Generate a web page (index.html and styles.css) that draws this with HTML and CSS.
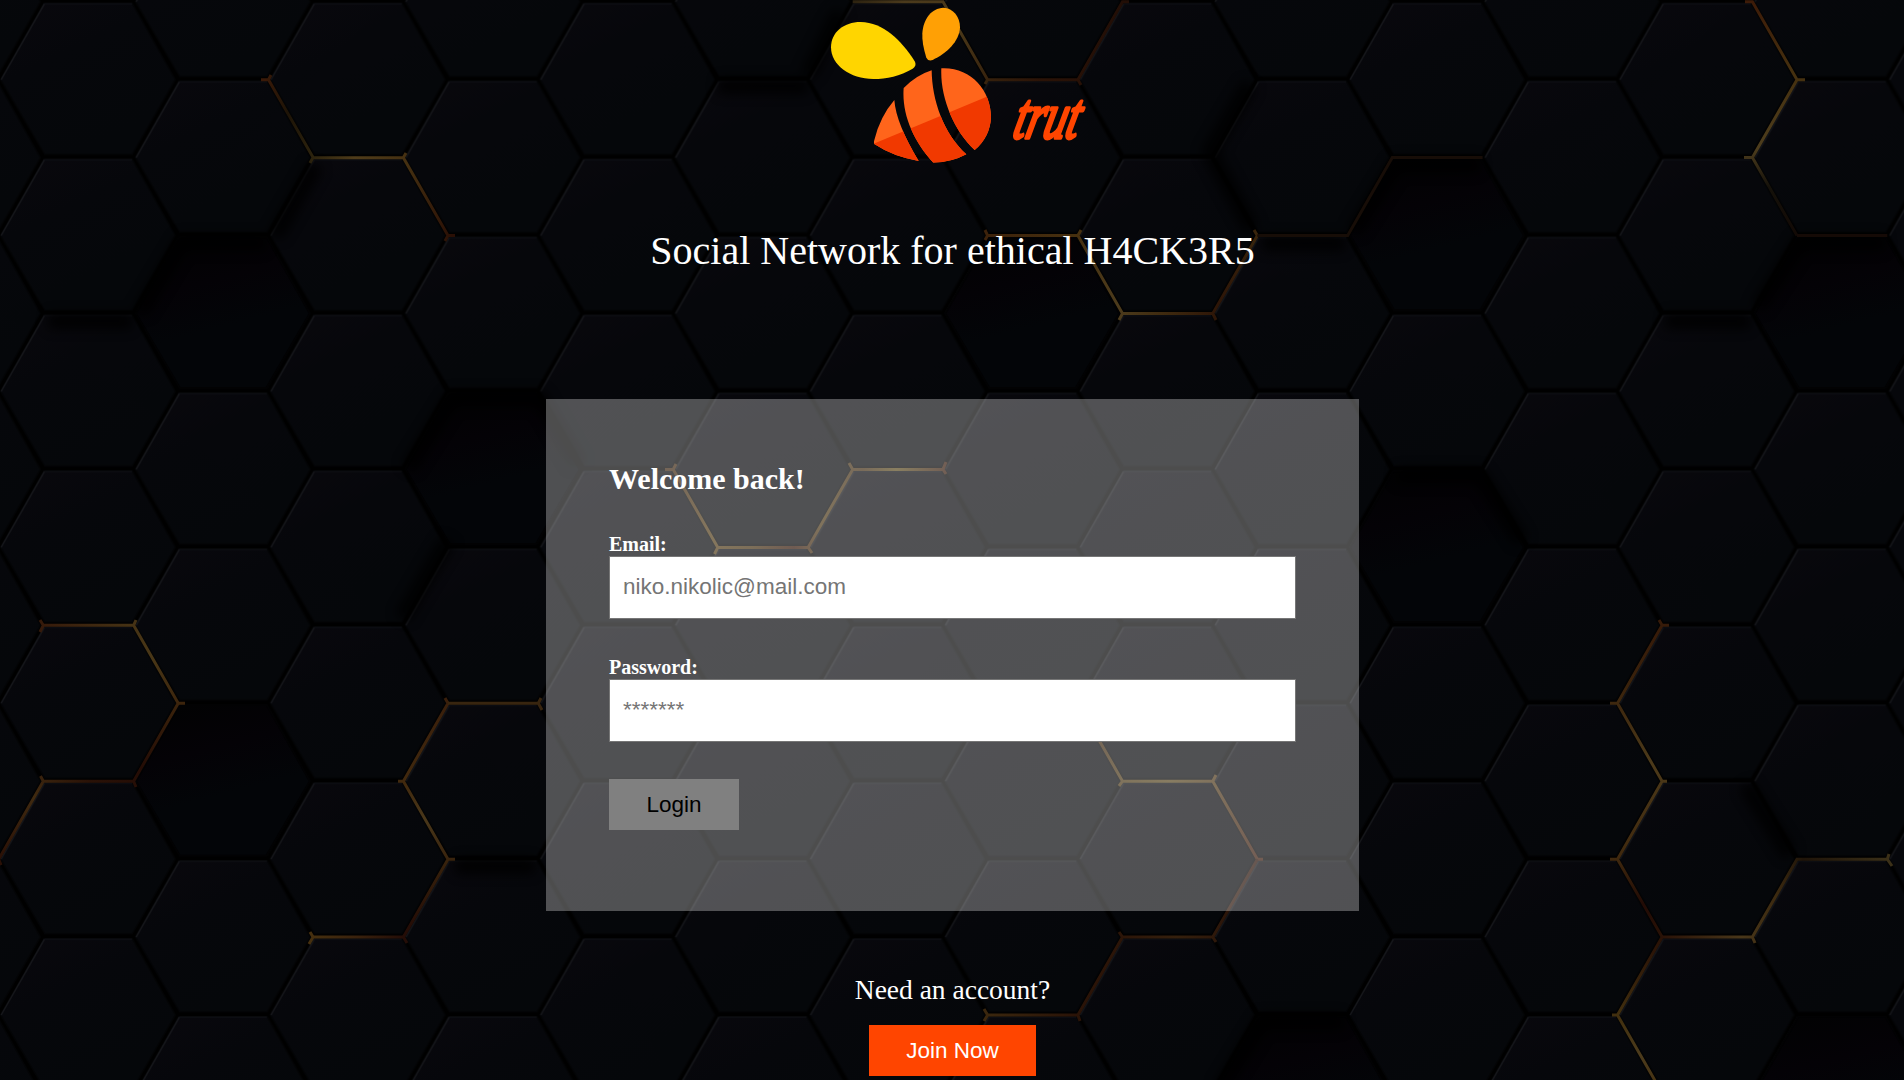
FILE: index.html
```html
<!DOCTYPE html>
<html lang="en">
<head>
  <meta charset="utf-8">
  <title>trut</title>
  <link rel="stylesheet" href="styles.css">
</head>
<body>
  <svg class="backdrop" viewBox="0 0 1904 1080" aria-hidden="true">
    <defs>
      <linearGradient id="face" x1="0.1" y1="0" x2="0.6" y2="0.9">
        <stop offset="0" stop-color="#09080d"/>
        <stop offset="0.4" stop-color="#06070b"/>
        <stop offset="1" stop-color="#05070a"/>
      </linearGradient>
      <linearGradient id="sunk" x1="0.3" y1="0" x2="0.6" y2="1">
        <stop offset="0" stop-color="#020203"/>
        <stop offset="0.3" stop-color="#040206"/>
        <stop offset="0.6" stop-color="#030508"/>
        <stop offset="1" stop-color="#030508"/>
      </linearGradient>
      <filter id="shade" filterUnits="userSpaceOnUse" x="0" y="0" width="1904" height="1080" color-interpolation-filters="sRGB"><feGaussianBlur stdDeviation="6"/></filter>
      <g id="cell">
        <path d="M-44 -76.2H43.5L86.500 0L43.500 74.500H-43.5L-87.5 0Z" fill="url(#face)" stroke="#030406" stroke-width="1.500"/>
        <path d="M-87.300 0L-44 -75.800" fill="none" stroke="#15161a" stroke-width="1.500"/>
        <path d="M-44 -75.800H43.5" fill="none" stroke="#0e0f14" stroke-width="1.300"/>
      </g>
      <g id="low">
        <path d="M-44 -76.2H43.5L86.500 0L43 74.500H-43.5L-87.5 0Z" fill="url(#sunk)" stroke="#020203" stroke-width="2"/>
      </g>
      <pattern id="comb" patternUnits="userSpaceOnUse" x="0" y="1.7" width="269.8" height="155.9">
        <rect width="269.8" height="155.9" fill="#000"/>
        <use href="#cell" x="88.45" y="77.95"/>
        <use href="#cell" x="223.35" y="0"/>
        <use href="#cell" x="223.35" y="155.9"/>
        <use href="#cell" x="-46.45" y="0"/>
        <use href="#cell" x="-46.45" y="155.9"/>
      </pattern>
      <linearGradient id="g1" gradientUnits="userSpaceOnUse" x1="265" y1="0" x2="452" y2="0">
        <stop offset="0" stop-color="#3b1a08"/><stop offset=".12" stop-color="#1e1407"/><stop offset=".25" stop-color="#2b220d"/><stop offset=".48" stop-color="#4f3c1a"/><stop offset=".76" stop-color="#453011"/><stop offset="1" stop-color="#2a0f05"/>
      </linearGradient>
      <linearGradient id="g2" gradientUnits="userSpaceOnUse" x1="850" y1="0" x2="1122" y2="0">
        <stop offset="0" stop-color="#2b210f"/><stop offset=".2" stop-color="#4b3a1c"/><stop offset=".4" stop-color="#4a3819"/><stop offset=".52" stop-color="#35200c"/><stop offset=".7" stop-color="#2b1307"/><stop offset="1" stop-color="#220e06"/>
      </linearGradient>
      <linearGradient id="g3" gradientUnits="userSpaceOnUse" x1="985" y1="0" x2="1260" y2="0">
        <stop offset="0" stop-color="#3d220b"/><stop offset=".33" stop-color="#46300f"/><stop offset=".48" stop-color="#4c3b1c"/><stop offset=".65" stop-color="#3f2a0f"/><stop offset=".85" stop-color="#2d1507"/><stop offset="1" stop-color="#3a260d"/>
      </linearGradient>
      <linearGradient id="g4" gradientUnits="userSpaceOnUse" x1="0" y1="0" x2="0" y2="240">
        <stop offset="0" stop-color="#3d1b08"/><stop offset=".3" stop-color="#45300f"/><stop offset=".62" stop-color="#4d3d1d"/><stop offset=".78" stop-color="#15110a"/><stop offset="1" stop-color="#120905"/>
      </linearGradient>
      <linearGradient id="g5" gradientUnits="userSpaceOnUse" x1="670" y1="0" x2="946" y2="0">
        <stop offset="0" stop-color="#3a2410"/><stop offset=".15" stop-color="#513c18"/><stop offset=".3" stop-color="#443012"/><stop offset=".45" stop-color="#321508"/><stop offset=".55" stop-color="#4a3716"/><stop offset=".7" stop-color="#402c14"/><stop offset=".82" stop-color="#57481d"/><stop offset="1" stop-color="#351a0c"/>
      </linearGradient>
      <linearGradient id="g6" gradientUnits="userSpaceOnUse" x1="38" y1="0" x2="180" y2="0">
        <stop offset="0" stop-color="#35190a"/><stop offset=".6" stop-color="#443013"/><stop offset=".8" stop-color="#493717"/><stop offset="1" stop-color="#3c240c"/>
      </linearGradient>
      <linearGradient id="g7" gradientUnits="userSpaceOnUse" x1="180" y1="703" x2="0" y2="860">
        <stop offset="0" stop-color="#3c240c"/><stop offset=".3" stop-color="#240c05"/><stop offset=".5" stop-color="#2a1207"/><stop offset=".72" stop-color="#402a10"/><stop offset="1" stop-color="#2a1006"/>
      </linearGradient>
      <linearGradient id="g8" gradientUnits="userSpaceOnUse" x1="0" y1="700" x2="0" y2="938">
        <stop offset="0" stop-color="#3a1f0b"/><stop offset=".35" stop-color="#41290e"/><stop offset=".5" stop-color="#49371a"/><stop offset=".7" stop-color="#36200b"/><stop offset=".95" stop-color="#250d06"/><stop offset="1" stop-color="#240d07"/>
      </linearGradient>
      <linearGradient id="g8b" gradientUnits="userSpaceOnUse" x1="310" y1="0" x2="404" y2="0">
        <stop offset="0" stop-color="#46300f"/><stop offset=".5" stop-color="#3a220d"/><stop offset="1" stop-color="#240d07"/>
      </linearGradient>
      <linearGradient id="g9" gradientUnits="userSpaceOnUse" x1="1078" y1="0" x2="1260" y2="0">
        <stop offset="0" stop-color="#2f180a"/><stop offset=".25" stop-color="#4a3817"/><stop offset=".5" stop-color="#55451f"/><stop offset=".75" stop-color="#4b3618"/><stop offset="1" stop-color="#37180b"/>
      </linearGradient>
      <linearGradient id="g10" gradientUnits="userSpaceOnUse" x1="985" y1="0" x2="1258" y2="0">
        <stop offset="0" stop-color="#3b270e"/><stop offset=".33" stop-color="#2a1307"/><stop offset=".5" stop-color="#2c1508"/><stop offset=".7" stop-color="#35200d"/><stop offset="1" stop-color="#260f07"/>
      </linearGradient>
      <linearGradient id="g11" gradientUnits="userSpaceOnUse" x1="0" y1="620" x2="0" y2="1093">
        <stop offset="0" stop-color="#361a09"/><stop offset=".14" stop-color="#3a220b"/><stop offset=".3" stop-color="#4c3a1a"/><stop offset=".5" stop-color="#40290e"/><stop offset=".6" stop-color="#220b05"/><stop offset=".7" stop-color="#2c1507"/><stop offset=".84" stop-color="#42300f"/><stop offset=".92" stop-color="#4c3b1c"/><stop offset="1" stop-color="#453010"/>
      </linearGradient>
      <linearGradient id="g12" gradientUnits="userSpaceOnUse" x1="1662" y1="0" x2="1890" y2="0">
        <stop offset="0" stop-color="#2a1207"/><stop offset=".35" stop-color="#49371a"/><stop offset=".5" stop-color="#3c2a10"/><stop offset=".62" stop-color="#1f1409"/><stop offset="1" stop-color="#3b3018"/>
      </linearGradient>
    </defs>

    <rect width="1904" height="1080" fill="url(#comb)"/>

    <!-- recessed cells -->
    <use href="#low" x="223.35" y="313.5"/>
    <use href="#low" x="493.15" y="469.4"/>
    <use href="#low" x="223.35" y="781.2"/>
    <use href="#low" x="1032.75" y="313.5"/>
    <use href="#low" x="1437.45" y="235.6"/>
    <use href="#low" x="1437.45" y="547.4"/>
    <use href="#low" x="1842.15" y="313.5"/>
    <use href="#low" x="1302.55" y="1093"/>
    <use href="#low" x="1842.15" y="1093"/>

    <!-- shadows thrown by the raised cells -->
    <g fill="none" stroke="#000" stroke-width="16" opacity=".85" filter="url(#shade)">
      <path d="M140 313L182 243H266"/>
      <path d="M408 469L452 399H540L578 465"/>
      <path d="M275 236L316 165"/>
      <path d="M48 321H132"/>
      <path d="M448 540L402 618"/>
      <path d="M718 86H808"/>
      <path d="M1250 84L1210 152L1252 230"/>
      <path d="M1354 232L1396 165H1480"/>
      <path d="M1262 243H1345"/>
      <path d="M1758 308L1800 243H1885"/>
      <path d="M1665 321H1750"/>
      <path d="M1396 476H1480L1522 542"/>
      <path d="M1746 785L1790 855"/>
      <path d="M1220 1090L1262 1022H1344"/>
      <path d="M840 12L808 75"/>
      <path d="M455 866H535"/>
    </g>

    <!-- lit seams -->
    <g fill="none" stroke-width="3">
      <g stroke="url(#g1)"><path d="M271 75L268.500 79.700L313.100 157.600L403.400 157.700L448 235.600L445 241M261 79.700H268.500M313 157.600L310 163M403.400 157.600L406 153M448 235.600H455"/></g>
      <g stroke="url(#g2)"><path d="M852.700 1.700H943L987.600 79.700H1077.900L1122.500 1.700H1129M987.600 79.700L985 84M1077.900 79.700L1081 85"/></g>
      <g stroke="url(#g3)"><path d="M985 230L987.600 235.600H1077.900L1122.500 313.500H1212.800L1257.400 235.600M987.600 235.600L985 240M1077.900 235.600L1081 230M1122.500 313.500L1119 320M1212.800 313.500L1216 320M1257.400 235.600L1254 230"/></g>
      <path d="M1257.400 235.600H1347.700L1392.300 157.600H1482.600" stroke="#170d07"/>
      <g stroke="url(#g4)"><path d="M1745 1.700H1752.400L1797 79.700L1752.400 157.600L1797 235.600V235.700M1797 79.700H1805M1752.400 157.600H1744"/></g>
      <path d="M1797 235.600H1887.300" stroke="#150a06"/>
      <g stroke="url(#g5)"><path d="M676 464L673.200 469.400L717.800 547.400H808.100L852.700 469.400H943M665 469.400H673M717.800 547.400L714.500 554M808.100 547.400L812 553M852.700 469.400L849 463M946 462L943 469.400L946 474"/></g>
      <g stroke="url(#g6)"><path d="M40 620L43.300 625.300H133.600L178.200 703.300H185M43.300 625.300L40 632M133.600 625.300L136 620"/></g>
      <g stroke="url(#g7)"><path d="M178.200 703.300L133.600 781.200H43.300L-1.300 859.200L1 865M133.600 781.200L136 787M43.300 781.200L40.500 776"/></g>
      <g stroke="url(#g8)"><path d="M448 703.300L403.400 781.200L448 859.200L403.400 937.100L407 943M448 703.300L445 698M403.400 781.200H398M448 859.200H455"/></g>
      <path d="M448 703.300H538.300L542 710M538.300 703.300L541 698" stroke="#38250f"/>
      <path d="M403.400 937.100H313.100L309 944M313.100 937.100L310 932" stroke="url(#g8b)"/>
      <g stroke="url(#g9)"><path d="M1077.900 703.300L1122.500 781.200H1212.800L1257.400 859.200M1122.500 781.200L1119 786M1212.800 781.200L1216 775M1257.400 859.200H1263"/></g>
      <g stroke="url(#g10)"><path d="M1257.400 859.200L1212.800 937.100H1122.500L1077.900 1015.100H987.600L984 1021M987.600 1015.100L984 1009M1212.800 937.100L1216 942M1122.500 937.100L1119 932M1077.900 1015.100L1080 1021"/></g>
      <g stroke="url(#g11)"><path d="M1659 620L1662.100 625.300L1617.500 703.300L1662.100 781.200L1617.500 859.200L1662.100 937.100L1617.500 1015.100L1662.100 1093M1662.100 625.300H1669M1617.500 703.300H1610M1662.100 781.200H1667M1617.500 859.200H1610M1617.500 1015.100H1612"/></g>
      <g stroke="url(#g12)"><path d="M1662.100 937.100H1752.400L1797 859.200H1887.300L1892 866M1752.400 937.100L1755 943M1887.300 859.200L1889 854"/></g>
    </g>
  </svg>

  <main class="page">
    <header class="brand">
      <svg class="logo" viewBox="0 0 900 540" role="img" aria-label="trut">
        <defs>
          <clipPath id="body">
            <path d="M253 300Q258 370 326 483Q250 470 194 433Q190 430 193 420Q210 350 253 300Z"/>
            <path d="M281 264Q320 225 365 211C366 300 400 400 469 463Q425 487 370 488C308 420 275 340 281 264Z"/>
            <path d="M394 205C480 200 543 270 543 350Q541 410 494 450C430 390 390 290 394 205Z"/>
          </clipPath>
        </defs>
        <path d="M63 142C63 98 100 66 152 66C220 68 272 118 315 185Q320 198 308 206C270 228 230 237 190 237C120 237 63 195 63 142Z" fill="#ffd500"/>
        <path d="M400 23C430 25 450 50 450 82C448 125 410 160 368 180Q355 185 349 173C340 145 336 120 337 100C340 55 365 25 400 23Z" fill="#ffa005"/>
        <g clip-path="url(#body)">
          <rect x="180" y="190" width="380" height="310" fill="#ff651b"/>
          <path d="M180 436L560 278V500H180Z" fill="#f13900"/>
        </g>
        <text class="wordmark" x="0" y="0" transform="translate(604 414) skewX(-14)" textLength="194" lengthAdjust="spacingAndGlyphs">trut</text>
      </svg>
      <h1 class="tagline">Social Network for ethical H4CK3R5</h1>
    </header>

    <form class="card">
      <h2 class="card-title">Welcome back!</h2>
      <label class="label" for="email">Email:</label>
      <input class="field" id="email" type="text" placeholder="niko.nikolic@mail.com">
      <label class="label" for="password">Password:</label>
      <input class="field" id="password" type="password" placeholder="*******">
      <button class="button" type="button">Login</button>
    </form>

    <section class="signup">
      <p class="signup-text">Need an account?</p>
      <button class="button button-join" type="button">Join Now</button>
    </section>
  </main>
</body>
</html>
```
FILE: styles.css
```css
* {
  box-sizing: border-box;
}

body {
  margin: 0;
  height: 1080px;
  overflow: hidden;
  background: #020304;
  color: #fff;
  font-family: "Liberation Serif", "Times New Roman", serif;
}

.backdrop {
  position: absolute;
  inset: 0;
  width: 1904px;
  height: 1080px;
}

.page {
  position: relative;
  display: flex;
  flex-direction: column;
  align-items: center;
}

.brand {
  display: flex;
  flex-direction: column;
  align-items: center;
  height: 399px;
}

.logo {
  width: 300px;
  height: 180px;
  margin-left: 16px;
  overflow: visible;
}

.wordmark {
  font: italic 196px "Liberation Serif", serif;
  fill: #ff4500;
  stroke: #ff4500;
  stroke-width: 11px;
  stroke-linejoin: round;
}

.tagline {
  margin: 48px 0 0 1px;
  font-size: 40px;
  font-weight: 400;
  line-height: 46px;
}

.card {
  display: flex;
  flex-direction: column;
  align-items: flex-start;
  width: 813px;
  height: 512px;
  margin-left: 1px;
  padding: 63px 63px 0;
  background: rgba(255, 255, 255, 0.3);
}

.card-title {
  margin: 0 0 37px;
  font-size: 30px;
  line-height: 34px;
}

.label {
  font-size: 20px;
  font-weight: 700;
  line-height: 23px;
}

.field {
  width: 100%;
  height: 63px;
  margin-bottom: 37px;
  padding: 0 13px 2px;
  border: 1px solid #767676;
  border-radius: 0;
  background: #fff;
  font-family: "Liberation Sans", Arial, sans-serif;
  font-size: 22.5px;
}

.field::placeholder {
  color: #757575;
}

.button {
  height: 51px;
  padding: 0 37.5px;
  border: 0;
  background: #808080;
  color: #000;
  font-family: "Liberation Sans", Arial, sans-serif;
  font-size: 22.5px;
}

.signup {
  display: flex;
  flex-direction: column;
  align-items: center;
  margin-left: 1px;
}

.signup-text {
  margin: 63px 0 19px;
  font-size: 27.5px;
  line-height: 32px;
}

.button-join {
  background: #ff4500;
  color: #fff;
}
```
